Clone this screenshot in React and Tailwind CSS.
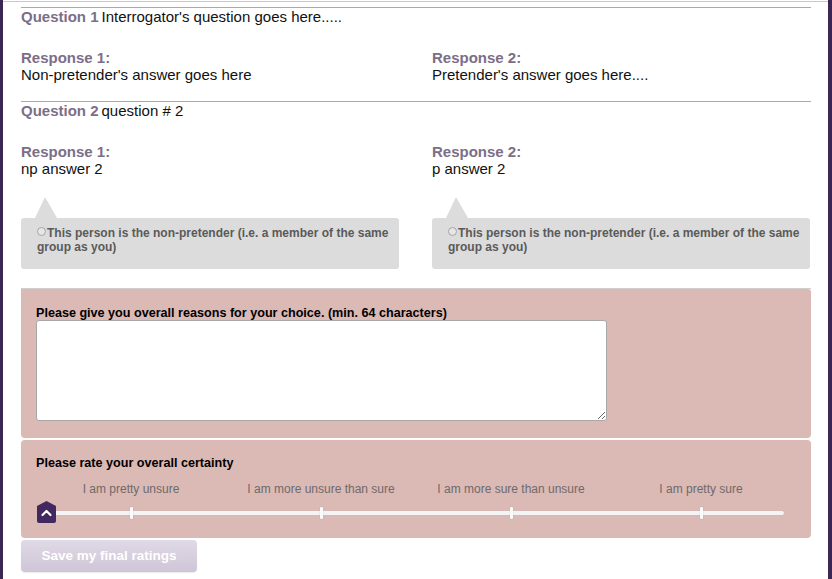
import React from "react";

const rounds = [
  {
    q: "Interrogator's question goes here.....",
    r1: "Non-pretender's answer goes here",
    r2: "Pretender's answer goes here....",
  },
  { q: "question # 2", r1: "np answer 2", r2: "p answer 2" },
];

const scale = [
  "I am pretty unsure",
  "I am more unsure than sure",
  "I am more sure than unsure",
  "I am pretty sure",
];

const Round = ({ index, q, r1, r2 }) => (
  <div>
    <div className="h-px bg-[#a9a9a9]" />
    <div className="mt-[1px] h-4 leading-4 text-[15px]">
      <span className="font-bold text-[#7b6e88]">Question {index}</span>
      <span className="ml-[3px] text-[#111]">{q}</span>
    </div>
    <div className="mt-[25px] flex">
      {[
        ["Response 1:", r1],
        ["Response 2:", r2],
      ].map(([label, text]) => (
        <div key={label} className="w-[411px] shrink-0 text-[15px] leading-4">
          <p className="h-4 font-bold text-[#7b6e88]">{label}</p>
          <p className="mt-px h-4 text-[#111]">{text}</p>
        </div>
      ))}
    </div>
  </div>
);

const Bubble = () => (
  <div className="w-[378px] shrink-0">
    <svg width="40" height="21" viewBox="0 0 40 21" className="ml-[14px] block">
      <polygon points="0,21 10,0 22,21" fill="#dcdcdc" />
    </svg>
    <div className="h-[51px] rounded-[3px] bg-[#dcdcdc] pl-[16px] pr-[8px] pt-[8px] text-[12px] font-bold leading-[14px] text-[#5a5a5a]">
      <span className="mr-[1px] inline-block h-[9px] w-[9px] translate-y-[-2px] rounded-full border border-[#a5a5a5] bg-[#e6e6e6] align-middle" />
      This person is the non-pretender (i.e. a member of the same group as you)
    </div>
  </div>
);

export default function App() {
  return (
    <div
      className="h-[579px] w-[832px] overflow-hidden border-l-[3px] border-r-[4px] border-[#3a2852] bg-white"
      style={{ fontFamily: '"Liberation Sans", Arial, sans-serif' }}
    >
      <div className="mt-px h-px bg-[#c8c8c8]" />
      <div className="pl-[18px] pr-[17px] pt-[5px]">
        <Round index={1} {...rounds[0]} />
        <div className="h-[18px]" />
        <Round index={2} {...rounds[1]} />

        <div className="mt-[20px] flex gap-[33px]">
          <Bubble />
          <Bubble />
        </div>

        <div className="mt-[19px] h-px bg-[#cfcfcf]" />
        <div className="rounded-b-[4px] rounded-tr-[3px] bg-[#dbb9b5] px-[15px] pb-[17px] pt-[17px]">
          <p className="h-[14px] text-[12.6px] font-bold leading-[15px] text-black">
            Please give you overall reasons for your choice. (min. 64 characters)
          </p>
          <textarea className="block h-[101px] w-[571px] resize rounded-[3px] border border-[#a8a8a8] bg-white" />
        </div>

        <div className="mt-[2px] h-[98px] rounded-[4px] bg-[#dbb9b5] px-[15px] pt-[16px]">
          <p className="h-[15px] text-[12.6px] font-bold leading-[15px] text-black">
            Please rate your overall certainty
          </p>
          <div className="mt-[11px] flex">
            {scale.map((s) => (
              <div key={s} className="w-[190px] text-center text-[12px] leading-[15px] text-[#6f6a6a]">
                {s}
              </div>
            ))}
          </div>
          <div className="relative mt-[4px] h-[24px] w-[760px]">
            <div className="absolute left-[4px] right-[12px] top-[10px] h-[4px] rounded-sm bg-[#f4f4f4] shadow-[0_0_1px_#bbb]" />
            {[95, 285, 475, 665].map((x) => (
              <div
                key={x}
                className="absolute top-[6px] h-[12px] w-[3px] rounded-[1px] bg-[#fafafa] shadow-[0_0_1px_#999]"
                style={{ left: x - 1 }}
              />
            ))}
            <svg width="19" height="22" viewBox="0 0 19 22" className="absolute left-[1px] top-0">
              <path d="M9.5 0 L19 5 L19 20 Q19 22 17 22 L2 22 Q0 22 0 20 L0 5 Z" fill="#41295f" />
              <path d="M5.5 14 L9.5 10 L13.5 14" stroke="#fff" strokeWidth="2.2" fill="none" strokeLinecap="round" strokeLinejoin="round" />
            </svg>
          </div>
        </div>

        <button className="mt-[2px] h-[32px] w-[176px] rounded-[4px] bg-gradient-to-b from-[#e0d9e6] to-[#cfc5d7] text-[13.5px] font-bold text-white shadow-[0_1px_1px_rgba(0,0,0,0.08)]">
          Save my final ratings
        </button>
      </div>
    </div>
  );
}
